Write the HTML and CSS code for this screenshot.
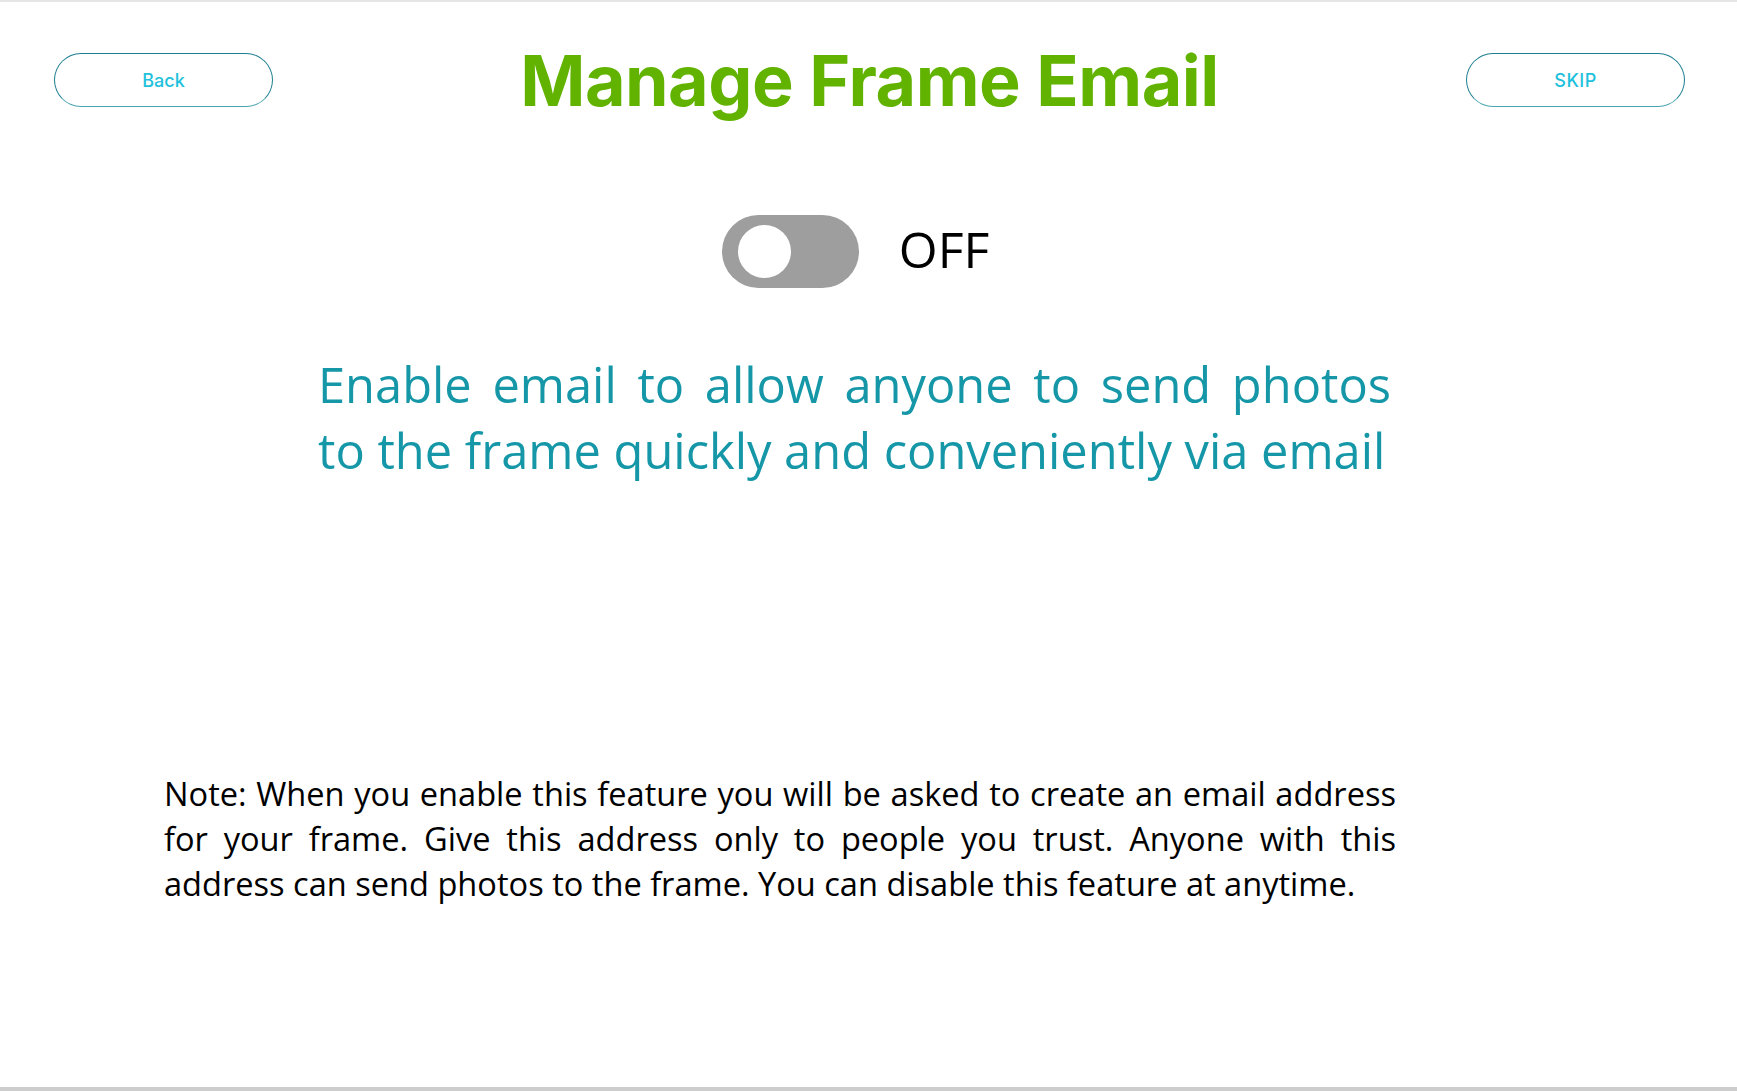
FILE: index.html
```html
<!DOCTYPE html>
<html lang="en">
<head>
    <meta charset="UTF-8">
    <meta name="viewport" content="width=device-width, initial-scale=1.0">
    <title>Manage Frame Email</title>
    <link rel="stylesheet" href="styles.css">
</head>
<body>

    <div class="screen">
        <header class="topbar">
            <button class="pill-btn" type="button">Back</button>
            <h1>Manage Frame Email</h1>
            <button class="pill-btn pill-btn--caps" type="button">SKIP</button>
        </header>

        <div class="switch-row">
            <span class="switch"><span class="switch-knob"></span></span>
            <span class="switch-label">OFF</span>
        </div>

        <p class="lead">Enable email to allow anyone to send photos to the frame quickly and conveniently via email</p>

        <p class="note">Note: When you enable this feature you will be asked to create an email address for your frame. Give this address only to people you trust. Anyone with this address can send photos to the frame. You can disable this feature at anytime.</p>
    </div>

</body>
</html>
```

FILE: styles.css
```css
body {
    margin: 0;
    background-color: #fff;
    font-family: "Open Sans", "Noto Sans", sans-serif;
}

.screen {
    box-sizing: border-box;
    height: 1091px;
    border-top: 2px solid #e6e6e6;
    border-bottom: 4px solid #cdcdcd;
    overflow: hidden;
}

/* barra superior: voltar / título / pular */
.topbar {
    display: flex;
    justify-content: space-between;
    align-items: center;
    padding: 44px 52px 0 54px;
}

.topbar h1 {
    margin: 0;
    font-family: Inter, "Liberation Sans", sans-serif;
    font-weight: 700;
    font-size: 70px;
    line-height: 1;
    color: #62b300;
    letter-spacing: -0.5px;
}

.pill-btn {
    width: 219px;
    height: 54px;
    margin-top: -2px;
    background: #fff;
    border: 1.5px solid #1b7d8f;
    border-bottom-color: #4aa4ae;
    border-radius: 27px;
    font-family: Inter, "Liberation Sans", sans-serif;
    font-size: 18px;
    font-weight: 500;
    color: #1ec1dc;
    cursor: pointer;
}

.pill-btn--caps {
    letter-spacing: 0.5px;
}

/* interruptor */
.switch-row {
    display: flex;
    justify-content: center;
    align-items: center;
    gap: 40px;
    margin: 99px 0 0 -26px;
}

.switch {
    box-sizing: border-box;
    display: flex;
    align-items: center;
    width: 137px;
    height: 73px;
    padding-left: 16px;
    background-color: #9e9e9e;
    border-radius: 37px;
}

.switch-knob {
    width: 53px;
    height: 53px;
    border-radius: 50%;
    background-color: #fff;
}

.switch-label {
    padding-bottom: 6px;
    font-size: 50px;
    color: #000;
    line-height: 1;
}

.lead,
.note {
    text-align: justify;
}

.lead {
    margin: 63px 0 0;
    padding: 0 346px 0 318px;
    font-size: 48.8px;
    line-height: 66px;
    color: #1597a8;
}

.note {
    margin: 288px 0 0;
    padding: 0 341px 0 164px;
    font-size: 32.6px;
    line-height: 45px;
    color: #000;
}
```
